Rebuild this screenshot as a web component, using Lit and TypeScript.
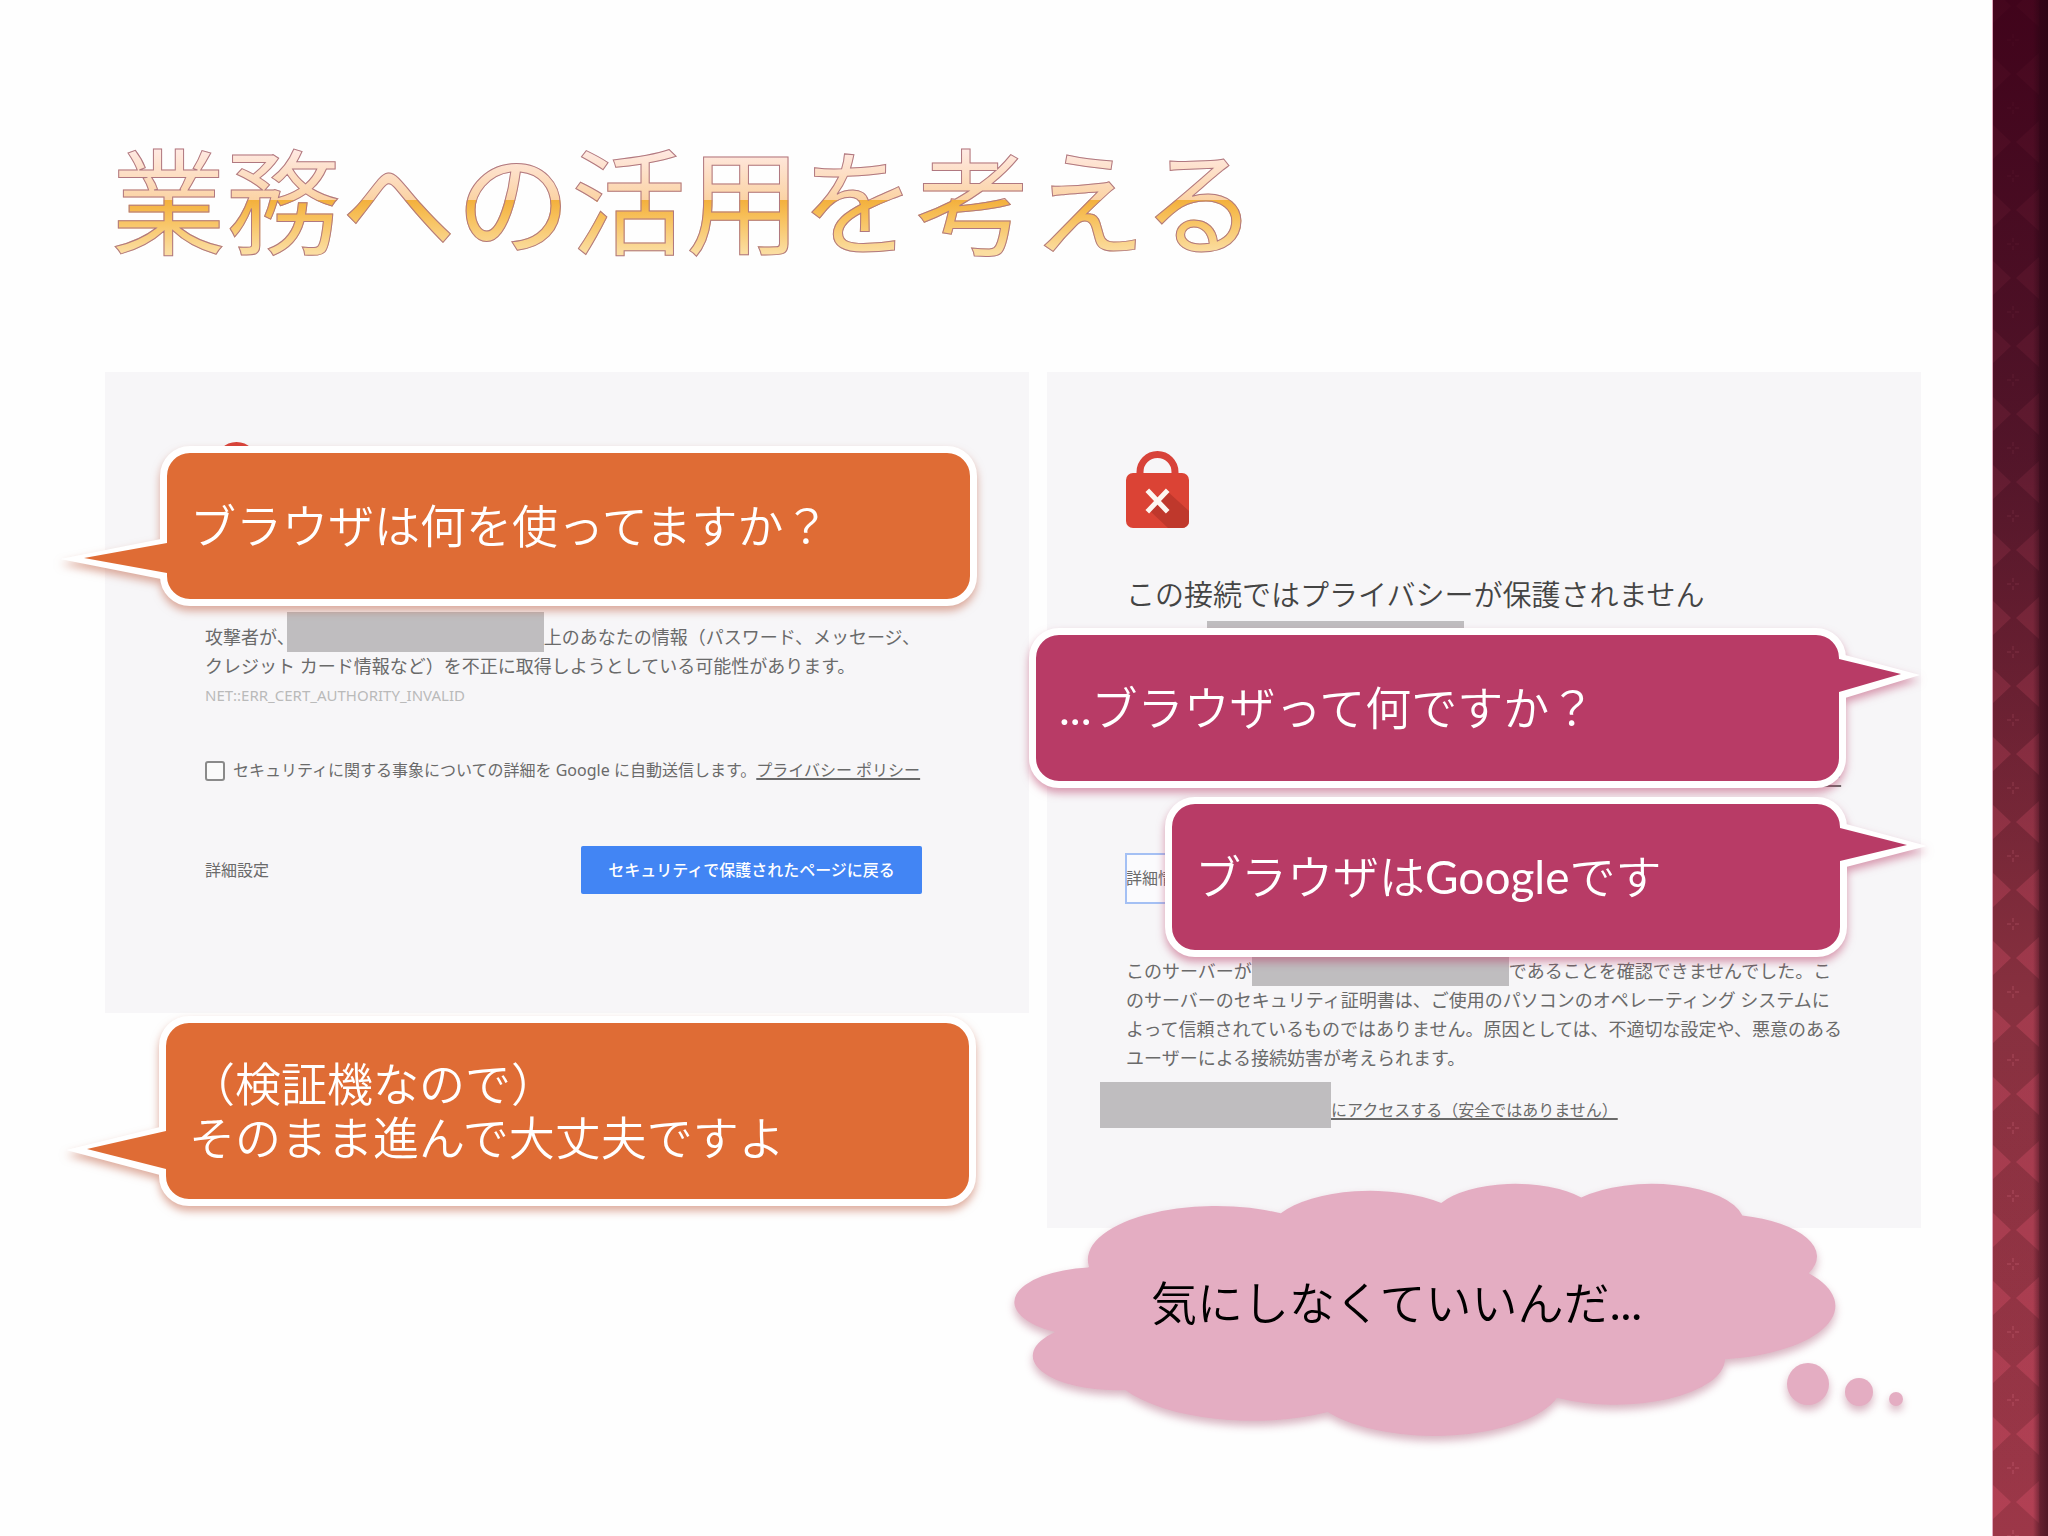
import { LitElement, html, css, svg, nothing } from "lit";
import { customElement, property } from "lit/decorators.js";

/** Radii, start angle and sweep (1/60000 degree) of each lobe of the thought cloud. */
const CLOUD_LOBES: Array<[number, number, number, number]> = [
  [6753, 9190, -11429249, 7426832],
  [5333, 7267, -8646143, 5396714],
  [4365, 5945, -8748475, 5983381],
  [4857, 6595, -7859164, 7034504],
  [5333, 7273, -4722533, 6541615],
  [6775, 9220, -2776035, 7816140],
  [5785, 7867, 37501, 6842000],
  [6752, 9215, 1347096, 6910353],
  [7720, 10543, 3974558, 4542661],
  [4360, 5918, -16496525, 8804134],
  [4345, 5945, -14809710, 9151131],
];

function cloudPath(): string {
  const rad = (a: number) => ((a / 60000) * Math.PI) / 180;
  const param = (a: number, rx: number, ry: number) =>
    Math.atan2(rx * Math.sin(a), ry * Math.cos(a));
  let x = 3900;
  let y = 14370;
  let d = `M${x} ${y}`;
  for (const [rx, ry, start, sweep] of CLOUD_LOBES) {
    const t0 = param(rad(start), rx, ry);
    const t1 = param(rad(start + sweep), rx, ry);
    x += rx * (Math.cos(t1) - Math.cos(t0));
    y += ry * (Math.sin(t1) - Math.sin(t0));
    const large = Math.abs(sweep) > 180 * 60000 ? 1 : 0;
    d += `A${rx} ${ry} 0 ${large} 1 ${Math.round(x)} ${Math.round(y)}`;
  }
  return d + "Z";
}

@customElement("speech-bubble")
export class SpeechBubble extends LitElement {
  @property() side: "left" | "right" = "left";
  @property({ type: Number }) tip = 80;
  @property({ type: Number }) reach = 100;
  @property({ type: Number }) aim = 40;
  @property({ type: Number }) from = 24;
  @property({ type: Number }) to = 57;

  static styles = css`
    :host {
      display: flex;
      box-sizing: border-box;
      border: 7px solid #fff;
      border-radius: 30px;
      background: var(--bubble);
      filter: drop-shadow(0 5px 4px var(--glow));
      color: #fff;
      font: 350 46px/54px Lato, "Noto Sans CJK JP", sans-serif;
    }
    .body {
      flex: 1;
      display: flex;
      flex-direction: column;
      justify-content: center;
      padding: 0 23px;
      white-space: nowrap;
    }
    .tail {
      position: absolute;
      top: 0;
      width: 1px;
      height: 1px;
      overflow: visible;
    }
    .left { left: 0; }
    .right { left: 100%; }
    .rim { fill: #fff; }
    .fill { fill: var(--bubble); }
  `;

  render() {
    const s = this.side === "left" ? -1 : 1;
    const rim = `${s * this.reach},${this.aim + 1} ${s * 6},${this.from - 4} ${s * 6},${this.to + 6}`;
    const fill = `${s * this.tip},${this.aim} 0,${this.from} ${s * -3},${this.from} ${s * -3},${this.to} 0,${this.to}`;
    return html`
      <svg class="tail ${this.side}" aria-hidden="true">
        <polygon class="rim" points=${rim}></polygon>
        <polygon class="fill" points=${fill}></polygon>
      </svg>
      <div class="body"><slot></slot></div>
    `;
  }
}

@customElement("thought-cloud")
export class ThoughtCloud extends LitElement {
  static styles = css`
    :host {
      display: flex;
      align-items: center;
      filter: drop-shadow(0 5px 4px rgba(170, 90, 120, 0.45));
      color: #000;
      font: 350 46px/54px Lato, "Noto Sans CJK JP", sans-serif;
    }
    .shape {
      position: absolute;
      inset: 0;
      width: 100%;
      height: 100%;
      overflow: visible;
      fill: #e4adc2;
    }
    .body {
      position: relative;
      padding: 0 0 12px 136px;
      white-space: nowrap;
    }
    .trail {
      position: absolute;
      left: 100%;
      top: 100%;
      width: 1px;
      height: 1px;
      overflow: visible;
      fill: #e4adc2;
    }
  `;

  render() {
    return html`
      <svg class="shape" viewBox="0 0 43200 43200" preserveAspectRatio="none" aria-hidden="true">
        <path d=${cloudPath()}></path>
      </svg>
      <svg class="trail" aria-hidden="true">
        <circle cx="-27" cy="-51" r="21"></circle>
        <circle cx="24" cy="-43" r="14"></circle>
        <circle cx="61" cy="-36" r="7"></circle>
      </svg>
      <div class="body"><slot></slot></div>
    `;
  }
}

const lock = svg`
  <path d="M14 26V21a17.5 17.5 0 0 1 35 0V26" fill="none" stroke="#d8433a" stroke-width="7"/>
  <rect x="0" y="22" width="63" height="55" rx="7" fill="#db4335"/>
  <path d="M41 40L63 60V70a7 7 0 0 1-7 7H42L23 59Z" fill="#bf382c"/>
  <path d="M23 41L40 59M40 41L23 59" stroke="#fdf6f0" stroke-width="5" stroke-linecap="square"/>
`;

@customElement("app-root")
export class AppRoot extends LitElement {
  static styles = css`
    :host {
      display: block;
      font-family: "Noto Sans", "Noto Sans CJK JP", sans-serif;
    }
    * { box-sizing: border-box; }
    .slide {
      display: grid;
      grid-template-columns: 1fr 56px;
      min-height: 100vh;
      background: #fefefe;
    }
    main { padding: 136px 71px 0 105px; }
    h1 {
      width: fit-content;
      margin: 0 0 116px 6px;
      font: 400 115px/120px "Noto Sans CJK JP", sans-serif;
      color: transparent;
      background: linear-gradient(#ffe9e2 14px, #fbd3a4 64px, #f3b03c 64px, #f7bf58 80px, #fbdda0 116px);
      -webkit-background-clip: text;
      background-clip: text;
      -webkit-text-stroke: 1px #b07880;
      white-space: nowrap;
    }
    .stage {
      display: grid;
      grid-template-columns: 924fr 874fr;
      gap: 18px;
      align-items: start;
    }
    .card {
      position: relative;
      background: #f7f6f8;
      color: #6a6a6a;
      font-size: 18px;
      line-height: 29px;
      white-space: nowrap;
    }
    .warning { padding: 70px 107px 119px 100px; }
    .details { padding: 79px 75px 100px 79px; }
    .lock { display: block; width: 63px; height: 78px; }
    .lead { height: 103px; padding-top: 44px; }
    h2 {
      margin: 0;
      font: 350 29px/40px "Noto Sans CJK JP", sans-serif;
      color: #444;
    }
    p { margin: 0; }
    .mask {
      display: inline-block;
      width: 257px;
      height: 40px;
      margin-top: -11px;
      vertical-align: bottom;
      background: #bfbdbf;
    }
    .after-comma { margin-left: -8px; }
    .address { height: 85px; padding-left: 81px; }
    .code {
      color: #bababa;
      font-size: 15px;
    }
    .report {
      display: flex;
      align-items: center;
      gap: 8px;
      margin-top: 46px;
      font-size: 16px;
    }
    .report input {
      appearance: none;
      width: 20px;
      height: 20px;
      margin: 0;
      border: 2px solid #8a8a8a;
      border-radius: 3px;
      background: #fafafa;
    }
    a {
      color: inherit;
      text-decoration: underline;
      text-decoration-thickness: 2px;
      text-underline-offset: 2px;
    }
    .actions {
      display: flex;
      justify-content: space-between;
      align-items: center;
      margin-top: 61px;
    }
    button {
      border: 0;
      padding: 0 0 2px;
      background: none;
      color: #6a6a6a;
      font: 16px/29px "Noto Sans CJK JP", sans-serif;
    }
    button.primary {
      width: 341px;
      height: 48px;
      border-radius: 2px;
      background: #4285f4;
      color: #fff;
      font-weight: 500;
    }
    button.toggle {
      display: block;
      height: 49px;
      margin-top: 62px;
      outline: 2px solid #a4c0f4;
      outline-offset: -1px;
      background: #fbfbfd;
    }
    .server { margin-top: 54px; }
    .proceed {
      display: flex;
      align-items: flex-end;
      margin: 9px 0 0 -26px;
      font-size: 16px;
    }
    .proceed .mask { width: 231px; height: 46px; margin: 0; }
    .proceed a { padding-bottom: 3px; }
    .latin { font-weight: 400; }

    .orange { --bubble: #df6c35; --glow: rgba(190, 90, 60, 0.5); }
    .pink { --bubble: #b83b66; --glow: rgba(184, 59, 102, 0.5); }
    speech-bubble, thought-cloud { position: absolute; z-index: 1; }
    .ask { left: 55px; right: 52px; top: 74px; height: 160px; }
    .assure { left: 54px; right: 53px; top: 644px; height: 190px; }
    .puzzled { left: -18px; right: 75px; top: 256px; height: 160px; }
    .answer { left: 118px; right: 74px; top: 425px; height: 160px; }
    .musing { left: -32px; right: 86px; top: 811px; height: 252px; }

    .ribbon {
      border-left: 1px solid #e3a9c0;
      background: linear-gradient(#42001b, #42081f 10%, #4f1525 25%, #6a2031 45%, #87303f 65%, #9c3748);
      overflow: hidden;
    }
    .ribbon svg { display: block; width: 100%; height: 100%; }
  `;

  private report() {
    return html`
      <label class="report">
        <input type="checkbox" />
        <span>セキュリティに関する事象についての詳細を Google に自動送信します。<a href="#privacy">プライバシー ポリシー</a></span>
      </label>
    `;
  }

  private head(title: string | typeof nothing) {
    return html`
      <svg class="lock" viewBox="0 0 63 78" aria-hidden="true">${lock}</svg>
      <div class="lead">${title === nothing ? nothing : html`<h2>${title}</h2>`}</div>
    `;
  }

  render() {
    return html`
      <div class="slide">
        <main>
          <h1>業務への活用を考える</h1>
          <div class="stage">
            <section class="card warning">
              ${this.head(nothing)}
              <p>
                攻撃者が、<span class="mask after-comma"></span>上のあなたの情報（パスワード、メッセージ、<br />クレジット カード情報など）を不正に取得しようとしている可能性があります。
              </p>
              <p class="code">NET::ERR_CERT_AUTHORITY_INVALID</p>
              ${this.report()}
              <div class="actions">
                <button type="button">詳細設定</button>
                <button type="button" class="primary">セキュリティで保護されたページに戻る</button>
              </div>
              <speech-bubble class="ask orange" side="left" tip="83" reach="107" aim="105" from="90" to="120">ブラウザは何を使ってますか？</speech-bubble>
              <speech-bubble class="assure orange" side="left" tip="79" reach="100" aim="126" from="108" to="146">
                <div>（検証機なので）</div>
                <div>そのまま進んで大丈夫ですよ</div>
              </speech-bubble>
            </section>

            <section class="card details">
              ${this.head("この接続ではプライバシーが保護されません")}
              <div class="address"><span class="mask"></span></div>
              ${this.report()}
              <button type="button" class="toggle">詳細情報</button>
              <p class="server">
                このサーバーが<span class="mask"></span>であることを確認できませんでした。こ<br />のサーバーのセキュリティ証明書は、ご使用のパソコンのオペレーティング システムに<br />よって信頼されているものではありません。原因としては、不適切な設定や、悪意のある<br />ユーザーによる接続妨害が考えられます。
              </p>
              <div class="proceed">
                <span class="mask"></span>
                <a href="#proceed">にアクセスする（安全ではありません）</a>
              </div>
              <speech-bubble class="puzzled pink" side="right" tip="62" reach="81" aim="39" from="24" to="57"><span><span class="latin">...</span>ブラウザって何ですか？</span></speech-bubble>
              <speech-bubble class="answer pink" side="right" tip="67" reach="87" aim="41" from="24" to="57"><span>ブラウザは<span class="latin">Google</span>です</span></speech-bubble>
              <thought-cloud class="musing">気にしなくていいんだ<span class="latin">...</span></thought-cloud>
            </section>
          </div>
        </main>
        <aside class="ribbon">
          <svg aria-hidden="true">
            <defs>
              <pattern id="argyle" width="56" height="68" y="6" patternUnits="userSpaceOnUse">
                <path d="M0 -17L18 0L0 17ZM0 51L18 68L0 85ZM23 0L46 -21V21ZM23 68L46 47V89Z" fill="#d8506a" fill-opacity=".36"/>
                <path d="M20 28v4M20 36v4M14 34h4M22 34h4" stroke="#e07088" stroke-opacity=".4" fill="none"/>
              </pattern>
              <linearGradient id="veil" x1="0" y1="0" x2="0" y2="1">
                <stop offset="0" stop-color="#40041b" stop-opacity=".92"/>
                <stop offset=".3" stop-color="#52142a" stop-opacity=".7"/>
                <stop offset=".65" stop-color="#87303f" stop-opacity="0.1"/>
                <stop offset="1" stop-color="#87303f" stop-opacity="0"/>
              </linearGradient>
              <linearGradient id="edge">
                <stop offset="0" stop-color="#200410" stop-opacity="0"/>
                <stop offset=".5" stop-color="#200410" stop-opacity=".45"/>
                <stop offset="1" stop-color="#200410" stop-opacity=".6"/>
              </linearGradient>
            </defs>
            <rect width="100%" height="100%" fill="url(#argyle)"/>
            <rect width="100%" height="100%" fill="url(#veil)"/>
            <rect x="40" width="15" height="100%" fill="url(#edge)"/>
          </svg>
        </aside>
      </div>
    `;
  }
}
